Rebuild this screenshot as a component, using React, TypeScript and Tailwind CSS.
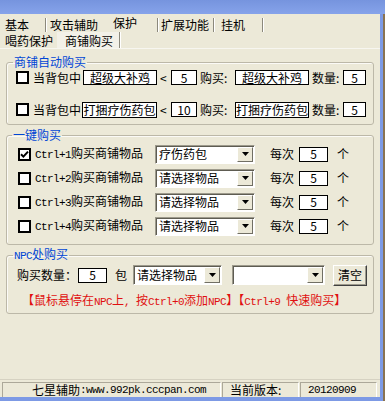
import type { ReactNode } from "react";

// half-width latin runs (SimSun-like monospace)
function M({ children }: { children: ReactNode }) {
  return (
    <span className="font-['Liberation_Mono',monospace] text-[11px] tracking-[-0.6px]">
      {children}
    </span>
  );
}

function Check({ checked = false }: { checked?: boolean }) {
  return (
    <span className="w-[13px] h-[13px] shrink-0 border-2 border-black bg-white flex items-center justify-center">
      {checked && (
        <svg width="9" height="9" viewBox="0 0 9 9">
          <path d="M1 4.2 L3.4 6.6 L8 1.6" stroke="black" strokeWidth="2" fill="none" />
        </svg>
      )}
    </span>
  );
}

function Box({ className, children }: { className: string; children: ReactNode }) {
  return (
    <span
      className={
        "shrink-0 flex items-center justify-center bg-white border border-black whitespace-nowrap overflow-hidden " +
        className
      }
    >
      {children}
    </span>
  );
}

function Arrow() {
  return (
    <span className="w-[16px] self-stretch my-px mr-px shrink-0 bg-[#ece9d8] border border-t-white border-l-white border-r-[#716f64] border-b-[#716f64] flex items-center justify-center">
      <svg width="7" height="4" viewBox="0 0 7 4">
        <path d="M0 0h7L3.5 4z" fill="black" />
      </svg>
    </span>
  );
}

function Combo({ className, value }: { className: string; value?: string }) {
  return (
    <span
      className={
        "shrink-0 flex bg-white border border-t-[#9d9a8c] border-l-[#9d9a8c] border-r-white border-b-white shadow-[inset_1px_1px_0_#5e5c52] " +
        className
      }
    >
      <span className="flex-1 pl-[3px] flex items-center whitespace-nowrap overflow-hidden">{value}</span>
      <Arrow />
    </span>
  );
}

function Sep({ h }: { h: string }) {
  return (
    <span className={"flex shrink-0 self-end " + h}>
      <span className="w-px bg-[#8c897c]" />
      <span className="w-px bg-white" />
    </span>
  );
}

const fieldset = "border border-[#bcb8a8] rounded-[3px] shadow-[inset_1px_1px_0_#fbfaf6]";

export default function App() {
  const hotkeys = [
    { n: "1", value: "疗伤药包", checked: true },
    { n: "2", value: "请选择物品", checked: false },
    { n: "3", value: "请选择物品", checked: false },
    { n: "4", value: "请选择物品", checked: false },
  ];

  return (
    <div className="w-[385px] h-[401px] flex flex-col bg-[#8a7352] font-['Noto_Sans_CJK_SC',sans-serif] text-[12px] leading-[14px] text-black overflow-hidden">
      {/* inactive caption strip */}
      <div className="h-[14px] shrink-0 bg-gradient-to-b from-[#7694de] to-[#86a3ea]" />

      <div className="flex flex-1 min-h-0">
        <div className="w-[383px] flex flex-col">
          <div className="flex flex-1 min-h-0">
            <div className="w-[380px] flex flex-col bg-[#ece9d8]">
              {/* tabs row 1 */}
              <div className="h-[18px] pt-[3px] flex items-center shrink-0">
                <span className="w-[45px] pl-[5px]">基本</span>
                <Sep h="h-[14px]" />
                <span className="w-[63px] pl-[3px]">攻击辅助</span>
                <span className="w-[47px] pl-[3px] -mt-[3px]">保护</span>
                <Sep h="h-[14px]" />
                <span className="w-[54px] pl-[2px]">扩展功能</span>
                <Sep h="h-[14px]" />
                <span className="w-[47px] pl-[6px]">挂机</span>
                <Sep h="h-[14px]" />
              </div>
              {/* tabs row 2 */}
              <div className="h-[16px] flex items-center shrink-0">
                <span className="w-[57px] pl-[5px] pt-[2px]">喝药保护</span>
                <span className="w-[62px] pl-[8px] pt-[2px] self-stretch flex items-center bg-[#f3f1e8]">商铺购买</span>
                <Sep h="h-[16px]" />
              </div>

              {/* page */}
              <div className="flex-1 flex flex-col border-t border-[#f7f6f0]">
                {/* auto buy */}
                <fieldset className={"ml-[6px] mt-[6px] w-[368px] pb-[7px] " + fieldset}>
                  <legend className="ml-[6px] px-px text-[#0046d5]">商铺自动购买</legend>
                  <div className="flex items-center h-[15px] mt-px">
                    <span className="ml-[9px]"><Check /></span>
                    <span className="ml-[4px] w-[50px]">当背包中</span>
                    <Box className="w-[74px] h-[15px]">超级大补鸡</Box>
                    <span className="ml-[3px] w-[7px]">&lt;</span>
                    <Box className="ml-[4px] w-[26px] h-[15px]">5</Box>
                    <span className="ml-[3px] w-[35px]">购买:</span>
                    <Box className="w-[74px] h-[15px]">超级大补鸡</Box>
                    <span className="ml-[3px] w-[31px]">数量:</span>
                    <Box className="w-[23px] h-[15px]">5</Box>
                  </div>
                  <div className="flex items-center h-[15px] mt-[17px]">
                    <span className="ml-[9px]"><Check /></span>
                    <span className="ml-[4px] w-[50px]">当背包中</span>
                    <Box className="w-[75px] h-[16px] -ml-px">打捆疗伤药包</Box>
                    <span className="ml-[3px] w-[7px]">&lt;</span>
                    <Box className="ml-[4px] w-[26px] h-[15px]">10</Box>
                    <span className="ml-[3px] w-[35px]">购买:</span>
                    <Box className="w-[74px] h-[16px]">打捆疗伤药包</Box>
                    <span className="ml-[3px] w-[31px]">数量:</span>
                    <Box className="w-[23px] h-[15px]">5</Box>
                  </div>
                </fieldset>

                {/* hotkey buy */}
                <fieldset className={"ml-[6px] mt-[3px] w-[368px] pb-[8px] " + fieldset}>
                  <legend className="ml-[5px] px-px text-[#0046d5]">一键购买</legend>
                  <div className="mt-[2px] flex flex-col gap-[4px]">
                    {hotkeys.map((k) => (
                      <div key={k.n} className="flex items-center h-[20px]">
                        <span className="ml-[11px]"><Check checked={k.checked} /></span>
                        <span className="ml-[4px] w-[120px] whitespace-nowrap">
                          <M>Ctrl+{k.n}</M>购买商铺物品
                        </span>
                        <Combo className="w-[100px] h-[19px]" value={k.value} />
                        <span className="ml-[15px] w-[24px]">每次</span>
                        <Box className="ml-[5px] w-[29px] h-[15px]">5</Box>
                        <span className="ml-[9px]">个</span>
                      </div>
                    ))}
                  </div>
                </fieldset>

                {/* npc buy */}
                <fieldset className={"ml-[6px] mt-[2px] w-[368px] pb-[6px] " + fieldset}>
                  <legend className="ml-[6px] px-px text-[#0046d5]">
                    <M>NPC</M>处购买
                  </legend>
                  <div className="flex items-center h-[22px] mt-px">
                    <span className="ml-[10px] w-[61px]">购买数量：</span>
                    <Box className="w-[29px] h-[15px]">5</Box>
                    <span className="ml-[8px] w-[12px]">包</span>
                    <Combo className="ml-[6px] w-[89px] h-[20px]" value="请选择物品" />
                    <Combo className="ml-[10px] w-[93px] h-[20px]" />
                    <button className="ml-[8px] w-[34px] h-[21px] bg-[#ece9d8] border border-t-white border-l-white border-r-[#404040] border-b-[#404040] shadow-[inset_-1px_-1px_0_#9d9a8c] flex items-center justify-center">
                      清空
                    </button>
                  </div>
                  <div className="mt-[7px] h-[14px] ml-[15px] whitespace-nowrap text-[#e01010]">
                    【鼠标悬停在<M>NPC</M>上<M>, </M>按<M>Ctrl+0</M>添加<M>NPC</M>】【<M>Ctrl+9 </M>快速购买】
                  </div>
                </fieldset>
              </div>

              {/* status bar */}
              <div className="h-[18px] shrink-0 pt-[2px] flex border-t border-[#d6d2c2]">
                <span className="ml-[2px] w-[219px] h-[16px] pl-[29px] flex items-center whitespace-nowrap border border-t-[#aca899] border-l-[#aca899] border-r-white border-b-white">
                  七星辅助<M>:www.992pk.cccpan.com</M>
                </span>
                <span className="ml-px w-[77px] h-[16px] pl-[7px] flex items-center border border-t-[#aca899] border-l-[#aca899] border-r-white border-b-white">
                  当前版本:
                </span>
                <span className="ml-px w-[77px] h-[16px] pl-[7px] flex items-center border border-t-[#aca899] border-l-[#aca899] border-r-white border-b-white">
                  <M>20120909</M>
                </span>
              </div>
            </div>
            <div className="w-[3px] bg-[#7d9ae5]" />
          </div>
          <div className="h-[4px] shrink-0 bg-[#7d9ae5]" />
        </div>
      </div>
    </div>
  );
}
